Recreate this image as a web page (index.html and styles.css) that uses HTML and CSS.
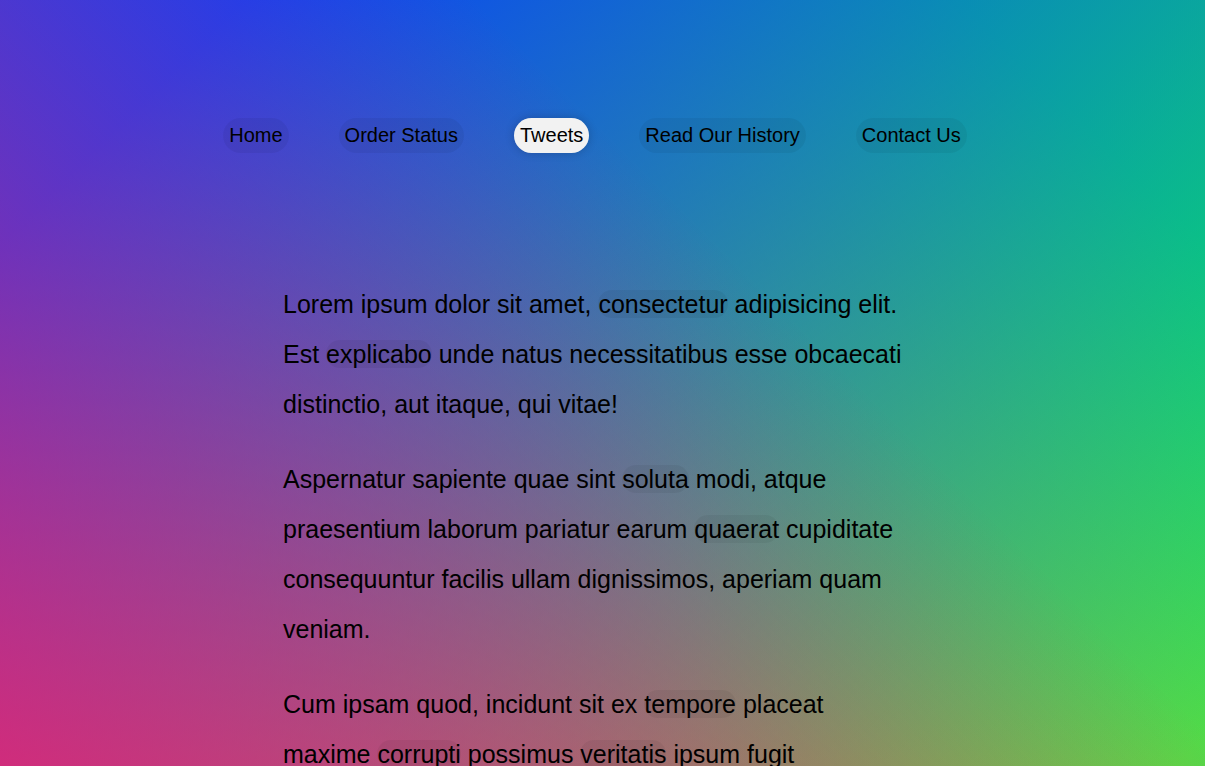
FILE: index.html
```html
<!DOCTYPE html>
<html lang="en">
<head>
<meta charset="utf-8">
<title>Follow Along Nav</title>
<link rel="stylesheet" href="styles.css">
</head>
<body>
<div class="page">
  <nav class="nav">
    <ul class="menu">
      <li><a href="#">Home</a></li>
      <li><a href="#">Order Status</a></li>
      <li class="active"><span class="highlight"></span><a href="#">Tweets</a></li>
      <li><a href="#">Read Our History</a></li>
      <li><a href="#">Contact Us</a></li>
    </ul>
  </nav>
  <div class="wrapper">
    <p>Lorem ipsum dolor sit amet, <a href="#">consectetur</a> adipisicing elit. Est <a href="#">explicabo</a> unde natus necessitatibus esse obcaecati distinctio, aut itaque, qui vitae!</p>
    <p>Aspernatur sapiente quae sint <a href="#">soluta</a> modi, atque praesentium laborum pariatur earum <a href="#">quaerat</a> cupiditate consequuntur facilis ullam dignissimos, aperiam quam veniam.</p>
    <p>Cum ipsam quod, incidunt sit ex <a href="#">tempore</a> placeat maxime <a href="#">corrupti</a> possimus <a href="#">veritatis</a> ipsum fugit recusandae est doloremque? Hic, <a href="#">quibusdam</a>, nulla.</p>
    <p>Esse quibusdam, ad, ducimus cupiditate <a href="#">nulla</a>, quae magni odit <a href="#">totam</a> ut consequatur eveniet sunt quam provident sapiente dicta neque quod.</p>
  </div>
</div>
</body>
</html>
```

FILE: styles.css
```css
html {
  box-sizing: border-box;
  height: 100%;
  overflow: hidden;
  background-color: #8a5ab0;
  background-image:
    linear-gradient(45deg, hsla(340, 100%, 55%, 1) 0%, hsla(340, 100%, 55%, 0) 70%),
    linear-gradient(135deg, hsla(225, 95%, 50%, 1) 10%, hsla(225, 95%, 50%, 0) 80%),
    linear-gradient(225deg, hsla(140, 90%, 50%, 1) 10%, hsla(140, 90%, 50%, 0) 80%),
    linear-gradient(315deg, hsla(35, 95%, 55%, 1) 100%, hsla(35, 95%, 55%, 0) 70%);
  background-size: 100% 1225px;
  background-repeat: no-repeat;
}

*, *::before, *::after {
  box-sizing: inherit;
}

body {
  margin: 0;
  height: 100%;
  overflow: hidden;
  font-family: "Liberation Sans", Arial, sans-serif;
  color: #000;
}

.page {
  width: 1190px;
}

.nav {
  padding-top: 118px;
}

.menu {
  margin: 0;
  padding: 0;
  list-style: none;
  display: flex;
  justify-content: center;
}

.menu li {
  margin: 0 25px;
}

.menu li.active {
  position: relative;
  z-index: 0;
}

.menu a {
  display: block;
  font-size: 20px;
  line-height: 23px;
  padding: 6px 6px 6px 6px;
  color: #000;
  text-decoration: none;
  background: rgba(0, 0, 0, 0.05);
  border-radius: 20px;
}

.highlight {
  position: absolute;
  top: 0;
  left: 0;
  right: 0;
  bottom: 0;
  z-index: -1;
  background: #fff;
  border-radius: 20px;
  box-shadow: 0 0 10px rgba(0, 0, 0, 0.2);
}

.wrapper {
  max-width: 624px;
  margin: 0 auto;
  padding-top: 126px;
  font-size: 25px;
  line-height: 2;
}

.wrapper p {
  margin: 0 0 25px;
}

.wrapper a {
  color: #000;
  text-decoration: none;
  background: rgba(0, 0, 0, 0.05);
  border-radius: 20px;
}
```
